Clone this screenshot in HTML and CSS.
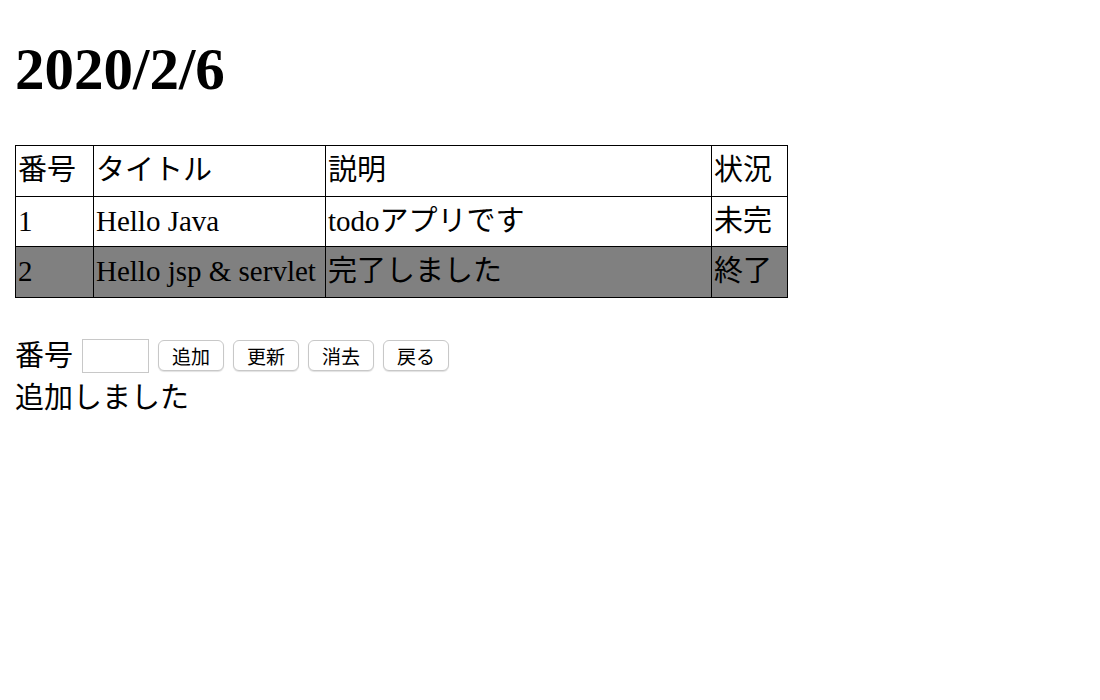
FILE: index.html
```html
<!DOCTYPE html>
<html lang="ja">
<head>
<meta charset="utf-8">
<title>todo</title>
<link rel="stylesheet" href="styles.css">
</head>
<body>
<h1 class="date">2020/2/6</h1>
<table class="todo">
  <tr>
    <td class="c-no">番号</td>
    <td class="c-title">タイトル</td>
    <td class="c-desc">説明</td>
    <td class="c-state">状況</td>
  </tr>
  <tr>
    <td>1</td>
    <td>Hello Java</td>
    <td>todoアプリです</td>
    <td>未完</td>
  </tr>
  <tr class="done">
    <td>2</td>
    <td>Hello jsp &amp; servlet</td>
    <td>完了しました</td>
    <td>終了</td>
  </tr>
</table>
<form class="ctrl">
  <div class="ctrl-row">
    <span class="lbl">番号</span>
    <input class="num" type="text">
    <button class="btn" type="button">追加</button>
    <button class="btn" type="button">更新</button>
    <button class="btn" type="button">消去</button>
    <button class="btn" type="button">戻る</button>
  </div>
  <div class="msg">追加しました</div>
</form>
</body>
</html>
```

FILE: styles.css
```css
html, body {
  background: #fff;
}
body {
  margin: 15px;
  font-family: "Liberation Serif", "Noto Sans CJK JP", serif;
  font-size: 29px;
  color: #000;
}
.date {
  font-size: 59px;
  font-weight: bold;
  line-height: 66px;
  margin: 21px 0 43px;
}
.todo {
  border-collapse: collapse;
  border: 1.5px solid #000;
  table-layout: fixed;
  width: 767px;
}
.todo td {
  border: 1.5px solid #000;
  padding: 0 0 0 2px;
  height: 49.5px;
  line-height: 49.5px;
  vertical-align: middle;
  white-space: nowrap;
  font-size: 29px;
}
.todo .c-no { width: 75px; }
.todo .c-title { width: 229px; }
.todo .c-desc { width: 383px; }
.todo .c-state { width: 73px; }
.todo tr.done td {
  background: #808080;
}
.ctrl {
  margin-top: 40px;
}
.ctrl-row {
  display: flex;
  align-items: center;
  height: 36px;
}
.lbl {
  font-size: 29px;
  line-height: 36px;
  margin-right: 9px;
}
.num {
  box-sizing: border-box;
  width: 67px;
  height: 34px;
  border: 1px solid #c8c8c8;
  margin: 0 9px 0 0;
  padding: 0;
  background: #fff;
}
.btn {
  box-sizing: border-box;
  height: 31px;
  padding: 0 13px;
  margin: 0 9px 0 0;
  font-family: "Noto Sans CJK JP", sans-serif;
  font-size: 19px;
  line-height: 29px;
  color: #000;
  background: #fff;
  border: 1px solid #c8c8c8;
  border-radius: 6px;
  box-shadow: 0 1px 1px rgba(0,0,0,0.12);
}
.msg {
  font-size: 29px;
  line-height: 40px;
  margin-top: 4px;
}
```
